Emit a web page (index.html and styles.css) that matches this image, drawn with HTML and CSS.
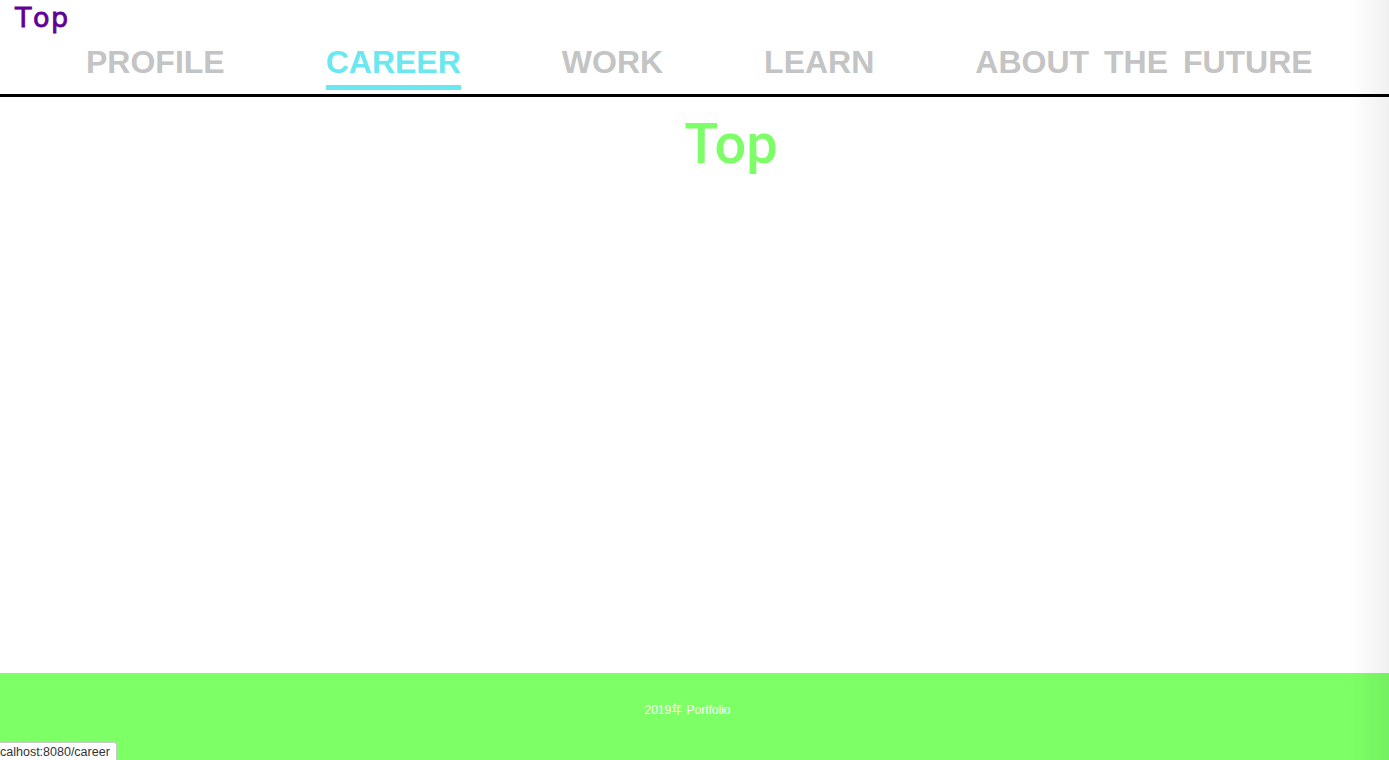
FILE: index.html
```html
<!DOCTYPE html>
<html lang="ja">
<head>
<meta charset="utf-8">
<title>Portfolio</title>
<link rel="stylesheet" href="styles.css">
</head>
<body>
<header class="site-header">
  <a class="logo" href="#">Top</a>
  <nav class="nav">
    <a class="nav-item" href="#">PROFILE</a>
    <a class="nav-item active" href="#">CAREER</a>
    <a class="nav-item" href="#">WORK</a>
    <a class="nav-item" href="#">LEARN</a>
    <a class="nav-item" href="#">ABOUT THE FUTURE</a>
  </nav>
</header>
<main class="main">
  <h1 class="page-title">Top</h1>
</main>
<footer class="footer">
  <p class="copy">2019年 Portfolio</p>
</footer>
<div class="edge-shade"></div>
<div class="status">calhost:8080/career</div>
</body>
</html>
```
FILE: styles.css
```css
html, body {
  margin: 0;
  padding: 0;
  height: 100%;
}
body {
  display: flex;
  flex-direction: column;
  background: #ffffff;
  font-family: "Liberation Sans", Arial, "Noto Sans CJK JP", sans-serif;
}
.site-header {
  display: flex;
  flex-direction: column;
  border-bottom: 3px solid #000000;
}
.logo {
  display: block;
  margin: 3px 0 0 15px;
  font-family: "DejaVu Sans", "Liberation Sans", sans-serif;
  font-size: 27px;
  line-height: 29px;
  font-weight: 400;
  font-kerning: none;
  letter-spacing: 1.5px;
  -webkit-text-stroke: 0.8px #620096;
  color: #620096;
  text-decoration: none;
  align-self: flex-start;
}
.nav {
  display: flex;
  gap: 101px;
  padding-left: 86px;
  margin-top: 12px;
  padding-bottom: 4px;
}
.nav-item {
  font-size: 32px;
  line-height: 36px;
  font-weight: 700;
  word-spacing: 6px;
  color: #c4c4c4;
  text-decoration: none;
  padding-bottom: 5px;
  border-bottom: 5px solid transparent;
}
.nav-item.active {
  color: #6ae8f0;
  border-bottom-color: #6ae8f0;
}
.main {
  flex: 1;
}
.page-title {
  margin: 15px 0 0;
  padding-left: 73px;
  text-align: center;
  font-family: "Roboto", "Liberation Sans", sans-serif;
  font-size: 56px;
  line-height: 64px;
  font-weight: 500;
  color: #7dfd67;
}
.footer {
  height: 87px;
  background: #7dff66;
  display: flex;
  align-items: flex-start;
  justify-content: center;
}
.copy {
  margin: 30px 0 0 -14px;
  color: #ffffff;
  font-size: 12px;
  line-height: 15px;
  font-family: "Liberation Sans", "Noto Sans CJK JP", sans-serif;
}
.edge-shade {
  position: fixed;
  top: 0;
  right: 0;
  width: 40px;
  height: 100%;
  background: linear-gradient(to right, rgba(0,0,0,0), rgba(0,0,0,0.06));
  pointer-events: none;
}
.status {
  position: fixed;
  left: 0;
  bottom: 0;
  background: #ffffff;
  border: 1px solid #c8c8c8;
  border-left: none;
  border-bottom: none;
  border-top-right-radius: 3px;
  padding: 1px 6px 0 0;
  font-size: 12.5px;
  line-height: 16px;
  color: #333333;
  font-family: "Liberation Sans", sans-serif;
}
```
